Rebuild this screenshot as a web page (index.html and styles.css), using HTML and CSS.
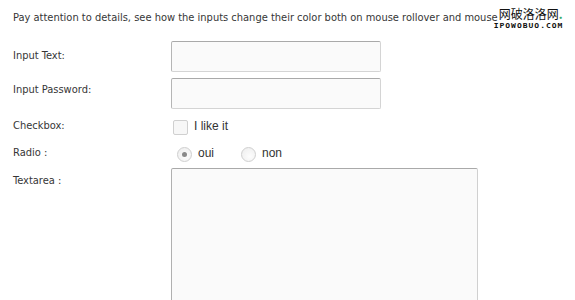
FILE: index.html
```html
<html charset="UTF-8">

<head>
  <link rel="stylesheet" href="styles.css">
</head>

<body>
  <div id="container">
    <div class="top">
      <p class="intro">Pay attention to details, see how the inputs change their color both on mouse rollover and mouse</p>
      <div class="watermark">
        <div class="wm_cn">网破洛洛网<span class="wm_dot">.</span></div>
        <div class="wm_en">IPOWOBUO.COM</div>
      </div>
    </div>

    <form class="form">
      <div class="row">
        <label class="label">Input Text:</label>
        <input class="field" type="text">
      </div>
      <div class="row row_pass">
        <label class="label">Input Password:</label>
        <input class="field" type="password">
      </div>
      <div class="row row_check">
        <label class="label">Checkbox:</label>
        <div class="choices">
          <span class="checkbox"></span>
          <span class="choice_text">I like it</span>
        </div>
      </div>
      <div class="row row_radio">
        <label class="label">Radio :</label>
        <div class="choices">
          <span class="radio radio_on"></span>
          <span class="choice_text">oui</span>
          <span class="radio radio_second"></span>
          <span class="choice_text">non</span>
        </div>
      </div>
      <div class="row row_area">
        <label class="label">Textarea :</label>
        <textarea class="area"></textarea>
      </div>
    </form>
  </div>
</body>

</html>
```

FILE: styles.css
```css
body {
  margin: 0;
  background-color: white;
  font-family: "DejaVu Sans Condensed", "DejaVu Sans", sans-serif;
  font-size: 11px;
  color: #363636;
  overflow: hidden;
}

#container {
  padding: 0 0 0 13px;
}

.top {
  display: flex;
  align-items: flex-start;
  height: 41px;
}

.intro {
  margin: 10px 0 0 0;
  line-height: 16px;
  white-space: nowrap;
}

.watermark {
  margin-left: 1px;
  margin-top: 6px;
}

.wm_cn {
  font-family: "Noto Sans CJK SC", sans-serif;
  font-size: 12px;
  line-height: 16px;
  color: #111;
  white-space: nowrap;
}

.wm_dot {
  color: #3a6;
  font-weight: bold;
}

.wm_en {
  font-family: "DejaVu Sans Mono", monospace;
  font-size: 8px;
  line-height: 9px;
  color: #111;
  font-weight: bold;
  letter-spacing: 1px;
  margin-left: -5px;
  transform: scaleY(0.8);
}

.row {
  display: grid;
  grid-template-columns: 158px auto;
  margin-bottom: 6px;
}

.label {
  padding-top: 7px;
  line-height: 16px;
}

.row_pass .label {
  padding-top: 4px;
}

.row_area .label {
  padding-top: 5px;
}

.field {
  width: 210px;
  height: 31px;
  box-sizing: border-box;
  border: 1px solid #d4d4d4;
  border-top-color: #a9a9a9;
  border-left-color: #b5b5b5;
  border-radius: 2px;
  background-color: #fafafa;
  margin: 0;
}

.row_check {
  height: 20px;
  margin-bottom: 6px;
}

.row_check .label {
  padding-top: 3px;
}

.row_radio {
  height: 22px;
  margin-bottom: 5px;
}

.row_radio .label {
  padding-top: 4px;
}

.choices {
  display: flex;
  align-items: center;
}

.checkbox {
  width: 15px;
  height: 15px;
  box-sizing: border-box;
  border: 1px solid #d0d0d0;
  border-radius: 2px;
  background-color: #f7f7f7;
  margin-left: 2px;
  margin-top: 4px;
}

.choice_text {
  font-family: "Liberation Sans", Arial, sans-serif;
  font-size: 12px;
  color: #333;
}

.row_check .choice_text {
  margin-left: 6px;
  margin-top: 2px;
}

.radio {
  width: 15px;
  height: 15px;
  box-sizing: border-box;
  border: 1px solid #cfcfcf;
  border-radius: 50%;
  background: radial-gradient(circle at 60% 65%, #fdfdfd 0%, #ececec 100%);
  margin-left: 6px;
  margin-right: 6px;
  margin-top: 5px;
  position: relative;
}

.radio_on::after {
  content: "";
  position: absolute;
  left: 4px;
  top: 4px;
  width: 5px;
  height: 5px;
  border-radius: 50%;
  background-color: #8a8a8a;
}

.radio_second {
  margin-left: 27px;
}

.row_radio .choice_text {
  margin-top: 2px;
}

.area {
  width: 307px;
  height: 160px;
  box-sizing: border-box;
  border: 1px solid #d0d0d0;
  border-top-color: #a9a9a9;
  border-left-color: #b0b0b0;
  border-radius: 2px;
  background-color: #fafafa;
  margin: 0;
  resize: none;
}
```
